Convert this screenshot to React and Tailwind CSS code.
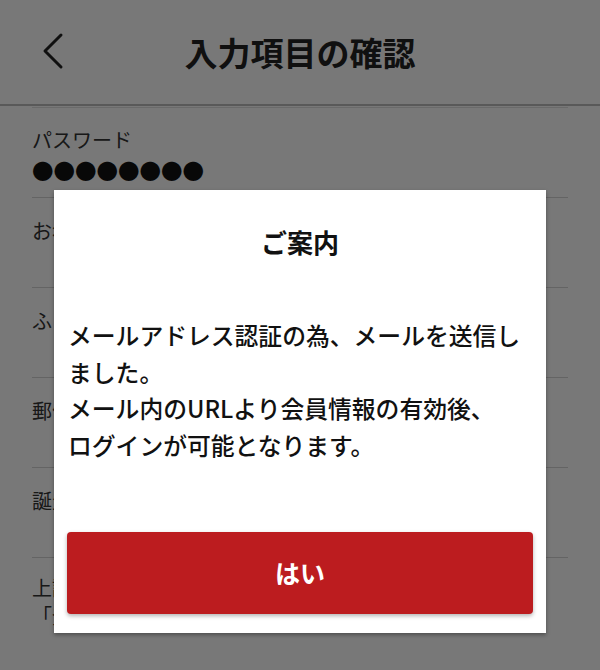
import { useState } from "react"

const rows = ["お名前", "ふりがな", "郵便番号", "誕生日"]

function ChevronLeft() {
  return (
    <svg width="24" height="38" viewBox="0 0 24 38" fill="none">
      <path d="M20 3 L4 19 L20 35" stroke="#222" strokeWidth="3" strokeLinecap="round" strokeLinejoin="round" />
    </svg>
  )
}

export default function App() {
  const [open, setOpen] = useState(true)

  return (
    <div className="relative h-[670px] w-[600px] overflow-hidden bg-white text-[#333] font-['Noto_Sans_CJK_JP','Noto_Sans',sans-serif]">
      {/* Header */}
      <div className="relative flex h-[106px] items-center justify-center border-b-2 border-[#bdbdbd]">
        <button className="absolute left-[41px] top-[32px]">
          <ChevronLeft />
        </button>
        <h1 className="text-[33px] font-bold leading-none text-[#222]">入力項目の確認</h1>
      </div>

      {/* Confirm list */}
      <div className="mx-8 mt-[1px] border-t border-[#e2e2e2]">
        <div className="pt-[20px] pb-[9px] border-b border-[#d4d4d4]">
          <p className="text-[20px] leading-[24px]">パスワード</p>
          <p className="text-[21.5px] leading-[36px] text-[#111]">●●●●●●●●</p>
        </div>
        {rows.map((label) => (
          <div key={label} className="h-[90px] pt-[21px] border-b border-[#d4d4d4]">
            <p className="text-[20px] leading-[24px]">{label}</p>
          </div>
        ))}
        <div className="pt-[16px]">
          <p className="text-[20px] leading-[28px]">
            上記の内容でよろしければ
            <br />
            「登録する」を押してください。
          </p>
        </div>
      </div>

      {/* Dialog */}
      {open && (
        <div className="absolute inset-0 bg-black/[0.53]">
          <div className="absolute left-[54px] top-[190px] w-[492px] bg-white px-[13px] pt-[36px] pb-[19px] shadow-[0_2px_4px_rgba(0,0,0,0.35)]">
            <h2 className="text-center text-[26px] font-bold leading-[32px] text-[#111]">ご案内</h2>
            <p className="mt-[59px] px-[1px] text-[23.8px] font-medium leading-[36.7px] text-[#111]">
              メールアドレス認証の為、メールを送信しました。
              <br />
              メール内のURLより会員情報の有効後、
              <br />
              ログインが可能となります。
            </p>
            <button
              onClick={() => setOpen(false)}
              className="mt-[68px] flex h-[82px] w-full items-center justify-center rounded-[4px] bg-[#bc1c1f] text-[25px] font-bold text-white shadow-[0_2px_4px_rgba(0,0,0,0.3)]"
            >
              はい
            </button>
          </div>
        </div>
      )}
    </div>
  )
}
